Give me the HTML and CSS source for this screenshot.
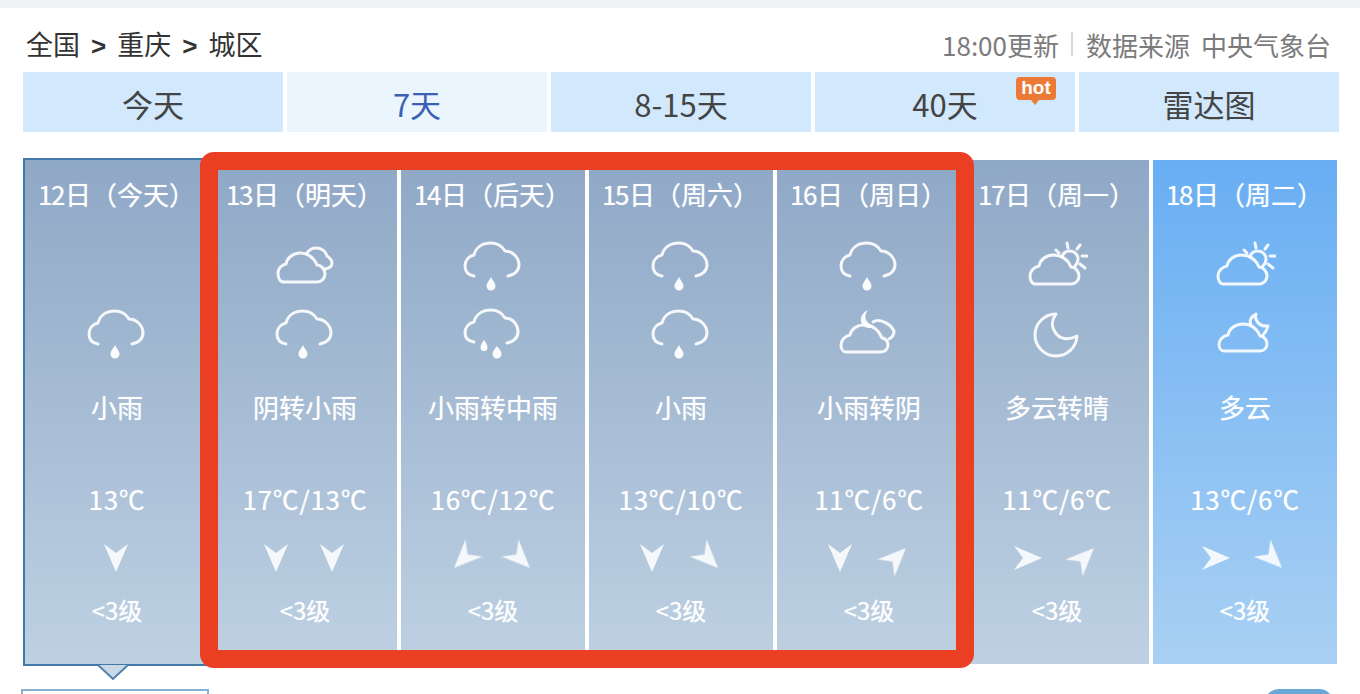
FILE: index.html
```html
<!DOCTYPE html>
<html lang="zh-CN">
<head>
    <meta charset="utf-8">
    <title>重庆城区 7天天气预报</title>
    <link rel="stylesheet" href="styles.css">
</head>
<body>
    <!-- icon set -->
    <svg class="defs" width="0" height="0">
        <symbol id="i-rain" viewBox="0 0 62 52">
            <path class="ln" d="M12 36C6 35 3 31 3 26C3 20 7 16 12 15C14 7 21 3 29 3C35 3 40 6 43 11C50 11 57 17 57 25C57 31 52 35 46 36"/>
            <path class="fl" d="M29 37C27 41 24.500 43 24.500 46A4.500 4.500 0 0 0 33.500 46C33.500 43 31 41 29 37Z"/>
        </symbol>
        <symbol id="i-rain2" viewBox="0 0 62 52">
            <path class="ln" d="M12 34C6 33 3 30 3 25C3 19 7 15 12 14C14 6 21 2 29 2C35 2 40 5 43 10C50 10 56 16 56 24C56 30 51 34 45 35"/>
            <path class="fl" d="M22 32C20 35 18.500 37 18.500 39.500A3.500 3.500 0 0 0 25.500 39.500C25.500 37 24 35 22 32Z"/>
            <path class="fl" d="M35 38C33 41 30.500 43 30.500 46A4.500 4.500 0 0 0 39.500 46C39.500 43 37 41 35 38Z"/>
        </symbol>
        <symbol id="i-overcast" viewBox="0 0 62 52">
            <path class="ln" d="M10 42H43C48 42 51 38 51 34C51 29 47 25 43 25C40 18 34 13 26 13C19 13 13 18 12 24C7 25 4 29 4 33C4 38 6 42 10 42Z"/>
            <path class="ln" d="M33 13C35 10 38 8 42 8C47 8 52 11 53 16C56 18 58 20 58 23C58 26 56 28 51 29"/>
        </symbol>
        <symbol id="i-suncloud" viewBox="0 0 62 52">
            <path class="ln" d="M9 44H45C50 44 53 40 53 36C53 31 49 27 45 27C42 20 36 15 27 15C20 15 14 20 13 26C8 27 4 31 4 36C4 40 6 44 9 44Z"/>
            <path class="ln" d="M36 17C37 13 40 11 44 11C49 11 52 15 52 19C52 22 51 24 49 26"/>
            <path class="ln" d="M30 10L33 13M41 3L42 8M54 5L51 9M56 16H61M54 24L59 28"/>
        </symbol>
        <symbol id="i-moon" viewBox="0 0 62 52">
            <path class="ln" d="M30 6A21 21 0 1 0 51 28C42 33 33 31 29 24C25 18 26 11 30 6Z"/>
        </symbol>
        <symbol id="i-mooncloud" viewBox="0 0 62 52">
            <path class="ln" d="M10 43H46C50 43 53 40 53 36C53 31 49 28 46 28C43 21 37 16 29 16C21 16 15 21 14 27C9 28 5 32 5 36C5 40 7 43 10 43Z"/>
            <path class="ln" d="M37 17C35 13 37 9 42 6C40 12 45 19 54 18C53 22 51 25 49 27"/>
        </symbol>
        <symbol id="i-moonovercast" viewBox="0 0 62 52">
            <path class="ln" d="M8 44H43C47 44 50 41 50 37C50 33 47 30 44 30C41 23 35 17 26 17C19 17 13 21 12 27C7 28 3 32 3 37C3 41 5 44 8 44Z"/>
            <path class="ln" d="M35 14C38 12 42 12 46 14C51 16 54 19 56 23C56 27 55 29 51 31"/>
            <path class="fl" d="M30 2C25 8 27 15 36 18C33 22 25 20 23 14C22 9 25 4 30 2Z"/>
        </symbol>
        <symbol id="i-wind" viewBox="0 0 30 30">
            <path d="M3 1L15 10L27 1L15 29Z"/>
        </symbol>
    </svg>

    <div class="topbar"></div>
    <div class="page">
        <div class="crumbs">
            <div class="path">全国 <b>&gt;</b> 重庆 <b>&gt;</b> 城区</div>
            <div class="source">
                <span>18:00更新</span><i class="sep"></i><span>数据来源</span><span class="org">中央气象台</span>
            </div>
        </div>

        <div class="tabs">
            <a class="tab">今天</a>
            <a class="tab on">7天</a>
            <a class="tab">8-15天</a>
            <a class="tab">40天
                <span class="hot">hot</span>
            </a>
            <a class="tab">雷达图</a>
        </div>

        <div class="days">
            <div class="day today">
                <div class="date"><span class="n">12</span>日（今天）</div>
                <div class="ico"></div>
                <div class="ico"><svg><use href="#i-rain"/></svg></div>
                <div class="desc">小雨</div>
                <div class="temp">13℃</div>
                <div class="wind"><svg class="s"><use href="#i-wind"/></svg></div>
                <div class="level">&lt;3级</div>
                <svg class="pointer" width="32" height="16" viewBox="0 0 32 16"><path d="M1 0L16 14L31 0"/></svg>
            </div>
            <div class="day">
                <div class="date"><span class="n">13</span>日（明天）</div>
                <div class="ico"><svg><use href="#i-overcast"/></svg></div>
                <div class="ico"><svg><use href="#i-rain"/></svg></div>
                <div class="desc">阴转小雨</div>
                <div class="temp">17℃/13℃</div>
                <div class="wind"><svg class="s"><use href="#i-wind"/></svg><svg class="s"><use href="#i-wind"/></svg></div>
                <div class="level">&lt;3级</div>
            </div>
            <div class="day">
                <div class="date"><span class="n">14</span>日（后天）</div>
                <div class="ico"><svg><use href="#i-rain"/></svg></div>
                <div class="ico"><svg><use href="#i-rain2"/></svg></div>
                <div class="desc">小雨转中雨</div>
                <div class="temp">16℃/12℃</div>
                <div class="wind"><svg class="sw"><use href="#i-wind"/></svg><svg class="se"><use href="#i-wind"/></svg></div>
                <div class="level">&lt;3级</div>
            </div>
            <div class="day">
                <div class="date"><span class="n">15</span>日（周六）</div>
                <div class="ico"><svg><use href="#i-rain"/></svg></div>
                <div class="ico"><svg><use href="#i-rain"/></svg></div>
                <div class="desc">小雨</div>
                <div class="temp">13℃/10℃</div>
                <div class="wind"><svg class="s"><use href="#i-wind"/></svg><svg class="se"><use href="#i-wind"/></svg></div>
                <div class="level">&lt;3级</div>
            </div>
            <div class="day">
                <div class="date"><span class="n">16</span>日（周日）</div>
                <div class="ico"><svg><use href="#i-rain"/></svg></div>
                <div class="ico"><svg><use href="#i-moonovercast"/></svg></div>
                <div class="desc">小雨转阴</div>
                <div class="temp">11℃/6℃</div>
                <div class="wind"><svg class="s"><use href="#i-wind"/></svg><svg class="ne"><use href="#i-wind"/></svg></div>
                <div class="level">&lt;3级</div>
            </div>
            <div class="day">
                <div class="date"><span class="n">17</span>日（周一）</div>
                <div class="ico"><svg><use href="#i-suncloud"/></svg></div>
                <div class="ico"><svg><use href="#i-moon"/></svg></div>
                <div class="desc">多云转晴</div>
                <div class="temp">11℃/6℃</div>
                <div class="wind"><svg class="e"><use href="#i-wind"/></svg><svg class="ne"><use href="#i-wind"/></svg></div>
                <div class="level">&lt;3级</div>
            </div>
            <div class="day future">
                <div class="date"><span class="n">18</span>日（周二）</div>
                <div class="ico"><svg><use href="#i-suncloud"/></svg></div>
                <div class="ico"><svg><use href="#i-mooncloud"/></svg></div>
                <div class="desc">多云</div>
                <div class="temp">13℃/6℃</div>
                <div class="wind"><svg class="e"><use href="#i-wind"/></svg><svg class="se"><use href="#i-wind"/></svg></div>
                <div class="level">&lt;3级</div>
            </div>
        </div>

        <div class="below">
            <div class="detailbox"></div>
            <div class="pill"></div>
        </div>

        <!-- red annotation drawn over the days -->
        <div class="mark"></div>
    </div>
</body>
</html>
```

FILE: styles.css
```css
html, body {
    margin: 0;
    height: 694px;
    overflow: hidden;
    background: #fff;
    font-family: "Noto Sans CJK SC", "Liberation Sans", sans-serif;
}
.defs {
    position: absolute;
}
.topbar {
    height: 8px;
    background: #f0f2f5;
}
.page {
    position: relative;
    padding-left: 23px;
    width: 1316px;
}

.crumbs {
    display: flex;
    justify-content: space-between;
    align-items: center;
    height: 58px;
    padding: 6px 8px 0 3px;
}
.path {
    font-size: 27px;
    color: #333;
}
.path b {
    font: bold 26px "Liberation Sans", sans-serif;
    margin: 0 5px;
}
.source {
    display: flex;
    align-items: center;
    margin-top: 2px;
    font-size: 26px;
    color: #7b7b7b;
}
.sep {
    width: 2px;
    height: 24px;
    margin: 0 13px 0 12px;
    background: #d8d8d8;
}
.org {
    margin-left: 11px;
}

.tabs {
    display: flex;
    gap: 4px;
}
.tab {
    position: relative;
    width: 260px;
    height: 60px;
    line-height: 64px;
    text-align: center;
    font-size: 31px;
    color: #444;
    background: #d2e8fc;
}
.tab.on {
    color: #3b60b5;
    background: #ebf5fe;
}
.hot {
    position: absolute;
    left: 201px;
    top: 5px;
    width: 40px;
    height: 23px;
    border-radius: 4px;
    background: #ea7a35;
    color: #fff;
    font: bold 19px/22px "Liberation Sans", sans-serif;
}
.hot::after {
    content: "";
    position: absolute;
    left: 15px;
    top: 23px;
    border: 4px solid transparent;
    border-top: 5px solid #ea7a35;
    border-bottom: 0;
}

.days {
    display: flex;
    gap: 4px;
    height: 504px;
    margin-top: 28px;
}
.day {
    position: relative;
    width: 184px;
    color: #fff;
    text-align: center;
    text-shadow: 0 0 1px rgba(255, 255, 255, .6);
    background: linear-gradient(#8fa8c6, #bed1e3);
}
.day.future {
    background: linear-gradient(#68aef3, #a9d0f3);
}
.day.today {
    margin: -2px -2px -2px 0;
    border: 2px solid #4278a8;
    height: 504px;
}
.date {
    height: 72px;
    line-height: 68px;
    padding-left: 13px;
    text-align: left;
    font-size: 26px;
    white-space: nowrap;
}
.date .n {
    letter-spacing: -1.5px;
    margin-right: 1px;
}
.ico {
    height: 68px;
    display: flex;
    justify-content: center;
    align-items: center;
}
.ico svg {
    width: 62px;
    height: 52px;
    filter: blur(.5px);
}
.ln {
    fill: none;
    stroke: #fff;
    stroke-width: 3;
    stroke-linecap: round;
    stroke-linejoin: round;
    opacity: .9;
}
.fl {
    fill: #fff;
    opacity: .95;
}
.desc {
    height: 83px;
    line-height: 77px;
    font-size: 26px;
}
.temp {
    height: 58px;
    padding-top: 20px;
    line-height: 56px;
    font-size: 26px;
    letter-spacing: .7px;
    white-space: nowrap;
}
.wind {
    height: 58px;
    padding-right: 3px;
    display: flex;
    justify-content: center;
    align-items: center;
    gap: 26px;
}
.wind svg {
    width: 30px;
    height: 30px;
    fill: #fff;
    opacity: .88;
    filter: blur(.6px);
}
.wind .sw { transform: rotate(45deg); }
.wind .se { transform: rotate(-45deg); }
.wind .ne { transform: rotate(-135deg); }
.wind .e  { transform: rotate(-90deg); }
.level {
    height: 48px;
    line-height: 46px;
    font-size: 24px;
}
.pointer {
    position: absolute;
    left: 72px;
    bottom: -17px;
    fill: #c8d8e6;
    stroke: #4f80ad;
    stroke-width: 2;
}

/* only the top edge of this row is on screen */
.below {
    display: flex;
    justify-content: space-between;
    height: 5px;
    overflow: hidden;
    margin-top: 25px;
    margin-left: -2px;
    padding-right: 5px;
}
.detailbox {
    width: 184px;
    height: 40px;
    border: 2px solid #8ab0cf;
}
.pill {
    width: 70px;
    height: 30px;
    border-radius: 15px;
    background: #6aa8d8;
}

.mark {
    position: absolute;
    left: 200px;
    top: 144px;
    width: 738px;
    height: 480px;
    border: 18px solid #eb3f24;
    border-radius: 14px;
}
```
